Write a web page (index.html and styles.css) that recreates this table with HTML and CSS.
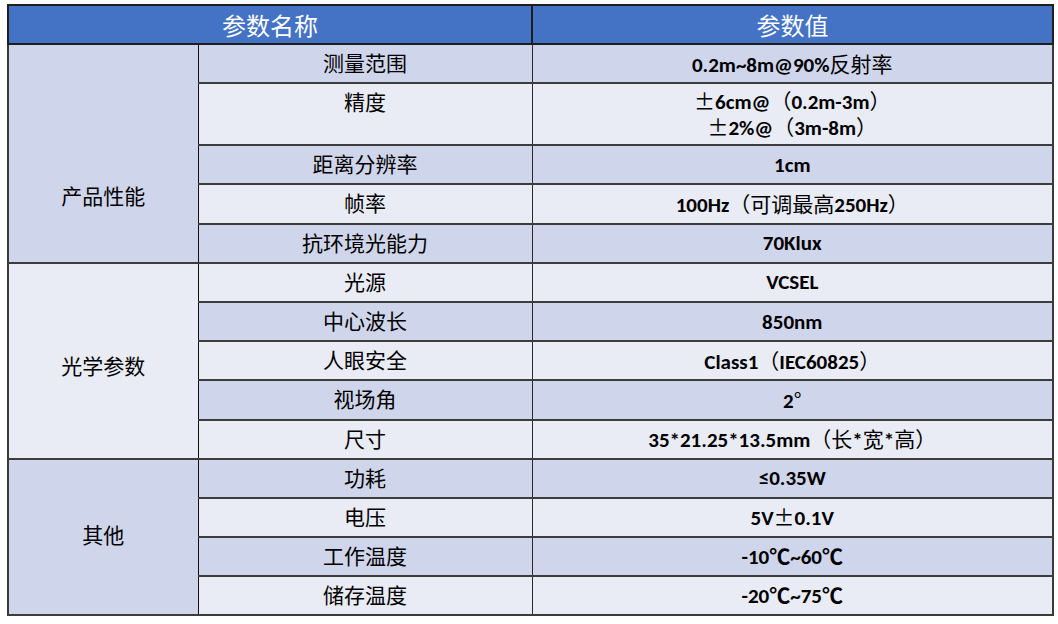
FILE: index.html
```html
<!DOCTYPE html>
<html lang="zh-CN">
<head>
<meta charset="utf-8">
<title>参数表</title>
<link rel="stylesheet" href="styles.css">
</head>
<body>
<div class="page">
<table class="spec">
  <colgroup><col class="c1"><col class="c2"><col class="c3"></colgroup>
  <thead>
    <tr class="head"><th colspan="2">参数名称</th><th>参数值</th></tr>
  </thead>
  <tbody>
    <tr class="dark"><td rowspan="5" class="group g1 dark">产品性能</td><td class="name">测量范围</td><td class="val">0.2m~8m@90%<span class="cjk">反射率</span></td></tr>
    <tr class="light tall"><td class="name">精度</td><td class="val"><span class="cjk">±</span>6cm@<span class="cjk">（</span>0.2m-3m<span class="cjk">）</span><br><span class="cjk">±</span>2%@<span class="cjk">（</span>3m-8m<span class="cjk">）</span></td></tr>
    <tr class="dark"><td class="name">距离分辨率</td><td class="val">1cm</td></tr>
    <tr class="light"><td class="name">帧率</td><td class="val">100Hz<span class="cjk">（可调最高</span>250Hz<span class="cjk">）</span></td></tr>
    <tr class="dark"><td class="name">抗环境光能力</td><td class="val">70Klux</td></tr>
    <tr class="light"><td rowspan="5" class="group g2 light">光学参数</td><td class="name">光源</td><td class="val">VCSEL</td></tr>
    <tr class="dark"><td class="name">中心波长</td><td class="val">850nm</td></tr>
    <tr class="light"><td class="name">人眼安全</td><td class="val">Class1<span class="cjk">（</span>IEC60825<span class="cjk">）</span></td></tr>
    <tr class="dark"><td class="name">视场角</td><td class="val">2<span class="cjk">°</span></td></tr>
    <tr class="light"><td class="name">尺寸</td><td class="val">35*21.25*13.5mm<span class="cjk">（长</span>*<span class="cjk">宽</span>*<span class="cjk">高）</span></td></tr>
    <tr class="dark"><td rowspan="4" class="group g3 dark">其他</td><td class="name">功耗</td><td class="val">≤0.35W</td></tr>
    <tr class="light"><td class="name">电压</td><td class="val">5V<span class="cjk">±</span>0.1V</td></tr>
    <tr class="dark"><td class="name">工作温度</td><td class="val">-10℃~60℃</td></tr>
    <tr class="light"><td class="name">储存温度</td><td class="val">-20℃~75℃</td></tr>
  </tbody>
</table>
</div>
</body>
</html>
```
FILE: styles.css
```css
html, body {
  margin: 0;
  padding: 0;
  background: #ffffff;
}

.page {
  padding: 4px 0 0 7px;
}

.spec {
  border-collapse: collapse;
  table-layout: fixed;
  width: 1045px;
  border: 2px solid #3a3a3a;
  font-family: "Noto Sans CJK SC", sans-serif;
  color: #000;
}

.c1 { width: 190px; }
.c2 { width: 334px; }
.c3 { width: 521px; }

.spec tr.head {
  height: 39px;
}

.spec th {
  background: #4472c4;
  color: #ffffff;
  font-weight: 400;
  font-size: 24px;
  line-height: 26px;
  padding: 0;
  text-align: center;
  vertical-align: middle;
  border: 2px solid #1e1e1e;
}

.spec tbody tr {
  height: 39.2px;
}

.spec tbody tr.tall {
  height: 62px;
}

.spec td {
  border: 1px solid #2a2a2a;
  border-bottom: 2px solid #3c3c3c;
  border-top: 2px solid #3c3c3c;
  padding: 0;
  text-align: center;
}

.dark td, td.dark { background: #cfd5ea; }
.light td, td.light { background: #e9ebf5; }

td.name {
  font-size: 21px;
  line-height: 24px;
  vertical-align: top;
  padding-top: 5px;
}

td.val {
  font-family: Carlito, Lato, "Noto Sans CJK SC", sans-serif;
  font-weight: 700;
  font-size: 21px;
  line-height: 24px;
  vertical-align: middle;
}

td.val .cjk {
  font-family: "Noto Sans CJK SC", sans-serif;
  font-weight: 400;
}

td.group {
  font-size: 21px;
  line-height: 24px;
  vertical-align: middle;
  border-right: 1px solid #111;
}

td.g1 { padding-top: 83px; }
td.g2 { padding-top: 9px; }
td.g3 { padding-bottom: 6px; }
```
